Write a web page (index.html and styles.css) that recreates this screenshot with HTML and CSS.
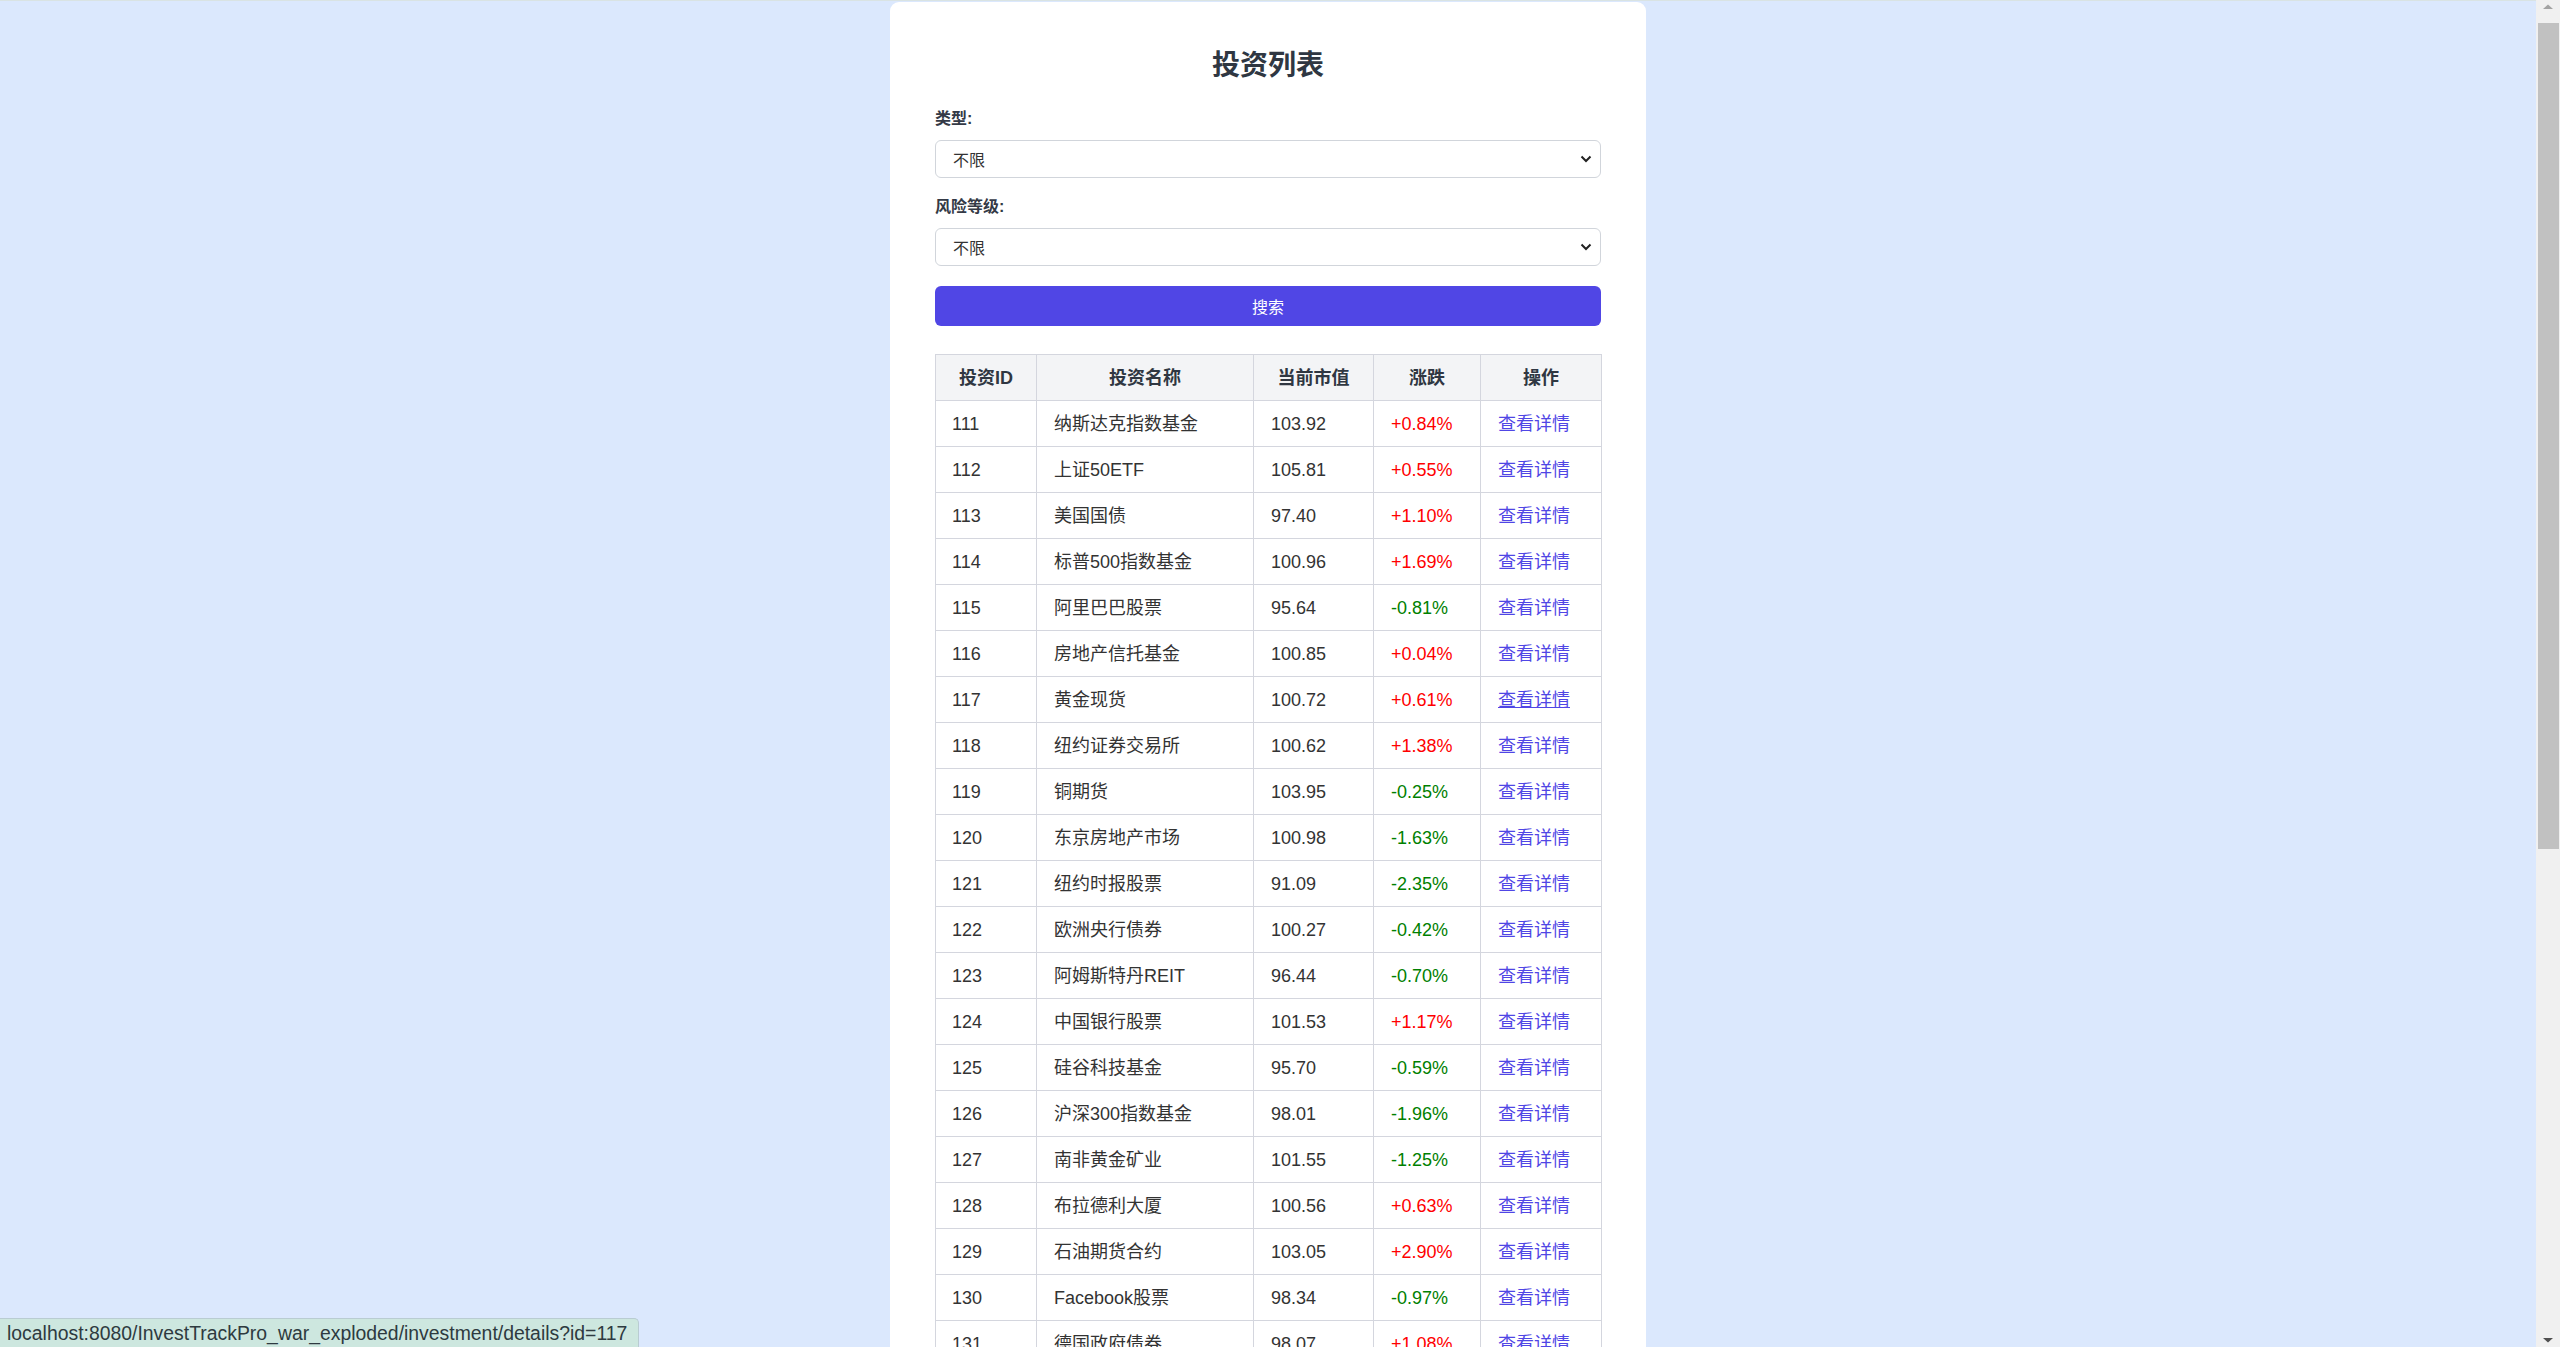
FILE: index.html
```html
<!DOCTYPE html>
<html lang="zh-CN">
<head>
<meta charset="utf-8">
<title>投资列表</title>
<link rel="stylesheet" href="styles.css">
</head>
<body>
<div class="topline"></div>
<main class="card">
  <h2 class="title">投资列表</h2>
  <form class="filter">
    <div class="group">
      <label class="label" for="type">类型:</label>
      <select id="type" class="select"><option>不限</option></select>
    </div>
    <div class="group">
      <label class="label" for="risk">风险等级:</label>
      <select id="risk" class="select"><option>不限</option></select>
    </div>
    <button type="button" class="btn">搜索</button>
  </form>
  <table class="grid">
    <colgroup>
      <col class="c1"><col class="c2"><col class="c3"><col class="c4"><col class="c5">
    </colgroup>
    <thead>
      <tr><th>投资ID</th><th>投资名称</th><th>当前市值</th><th>涨跌</th><th>操作</th></tr>
    </thead>
    <tbody>
      <tr><td>111</td><td>纳斯达克指数基金</td><td>103.92</td><td class="up">+0.84%</td><td><a href="#">查看详情</a></td></tr>
      <tr><td>112</td><td>上证50ETF</td><td>105.81</td><td class="up">+0.55%</td><td><a href="#">查看详情</a></td></tr>
      <tr><td>113</td><td>美国国债</td><td>97.40</td><td class="up">+1.10%</td><td><a href="#">查看详情</a></td></tr>
      <tr><td>114</td><td>标普500指数基金</td><td>100.96</td><td class="up">+1.69%</td><td><a href="#">查看详情</a></td></tr>
      <tr><td>115</td><td>阿里巴巴股票</td><td>95.64</td><td class="down">-0.81%</td><td><a href="#">查看详情</a></td></tr>
      <tr><td>116</td><td>房地产信托基金</td><td>100.85</td><td class="up">+0.04%</td><td><a href="#">查看详情</a></td></tr>
      <tr><td>117</td><td>黄金现货</td><td>100.72</td><td class="up">+0.61%</td><td><a href="#" class="hover">查看详情</a></td></tr>
      <tr><td>118</td><td>纽约证券交易所</td><td>100.62</td><td class="up">+1.38%</td><td><a href="#">查看详情</a></td></tr>
      <tr><td>119</td><td>铜期货</td><td>103.95</td><td class="down">-0.25%</td><td><a href="#">查看详情</a></td></tr>
      <tr><td>120</td><td>东京房地产市场</td><td>100.98</td><td class="down">-1.63%</td><td><a href="#">查看详情</a></td></tr>
      <tr><td>121</td><td>纽约时报股票</td><td>91.09</td><td class="down">-2.35%</td><td><a href="#">查看详情</a></td></tr>
      <tr><td>122</td><td>欧洲央行债券</td><td>100.27</td><td class="down">-0.42%</td><td><a href="#">查看详情</a></td></tr>
      <tr><td>123</td><td>阿姆斯特丹REIT</td><td>96.44</td><td class="down">-0.70%</td><td><a href="#">查看详情</a></td></tr>
      <tr><td>124</td><td>中国银行股票</td><td>101.53</td><td class="up">+1.17%</td><td><a href="#">查看详情</a></td></tr>
      <tr><td>125</td><td>硅谷科技基金</td><td>95.70</td><td class="down">-0.59%</td><td><a href="#">查看详情</a></td></tr>
      <tr><td>126</td><td>沪深300指数基金</td><td>98.01</td><td class="down">-1.96%</td><td><a href="#">查看详情</a></td></tr>
      <tr><td>127</td><td>南非黄金矿业</td><td>101.55</td><td class="down">-1.25%</td><td><a href="#">查看详情</a></td></tr>
      <tr><td>128</td><td>布拉德利大厦</td><td>100.56</td><td class="up">+0.63%</td><td><a href="#">查看详情</a></td></tr>
      <tr><td>129</td><td>石油期货合约</td><td>103.05</td><td class="up">+2.90%</td><td><a href="#">查看详情</a></td></tr>
      <tr><td>130</td><td>Facebook股票</td><td>98.34</td><td class="down">-0.97%</td><td><a href="#">查看详情</a></td></tr>
      <tr><td>131</td><td>德国政府债券</td><td>98.07</td><td class="up">+1.08%</td><td><a href="#">查看详情</a></td></tr>
      <tr><td>132</td><td>伦敦商业地产</td><td>99.12</td><td class="down">-0.33%</td><td><a href="#">查看详情</a></td></tr>
      <tr><td>133</td><td>白银期货</td><td>102.41</td><td class="up">+0.92%</td><td><a href="#">查看详情</a></td></tr>
      <tr><td>134</td><td>日经225指数基金</td><td>97.86</td><td class="down">-1.14%</td><td><a href="#">查看详情</a></td></tr>
      <tr><td>135</td><td>腾讯控股股票</td><td>104.27</td><td class="up">+1.45%</td><td><a href="#">查看详情</a></td></tr>
      <tr><td>136</td><td>新加坡REIT</td><td>99.58</td><td class="down">-0.21%</td><td><a href="#">查看详情</a></td></tr>
      <tr><td>137</td><td>天然气期货</td><td>96.73</td><td class="down">-2.08%</td><td><a href="#">查看详情</a></td></tr>
      <tr><td>138</td><td>苹果公司股票</td><td>103.66</td><td class="up">+0.77%</td><td><a href="#">查看详情</a></td></tr>
      <tr><td>139</td><td>中国国债</td><td>100.14</td><td class="up">+0.12%</td><td><a href="#">查看详情</a></td></tr>
      <tr><td>140</td><td>创业板指数基金</td><td>95.29</td><td class="down">-1.52%</td><td><a href="#">查看详情</a></td></tr>
      <tr><td>141</td><td>香港写字楼</td><td>98.93</td><td class="down">-0.66%</td><td><a href="#">查看详情</a></td></tr>
      <tr><td>142</td><td>铂金现货</td><td>101.08</td><td class="up">+0.48%</td><td><a href="#">查看详情</a></td></tr>
      <tr><td>143</td><td>特斯拉股票</td><td>105.37</td><td class="up">+2.21%</td><td><a href="#">查看详情</a></td></tr>
      <tr><td>144</td><td>美国公司债券</td><td>99.81</td><td class="down">-0.18%</td><td><a href="#">查看详情</a></td></tr>
      <tr><td>145</td><td>全球医疗基金</td><td>102.59</td><td class="up">+1.03%</td><td><a href="#">查看详情</a></td></tr>
      <tr><td>146</td><td>巴黎商业地产</td><td>97.15</td><td class="down">-0.89%</td><td><a href="#">查看详情</a></td></tr>
    </tbody>
  </table>
</main>
<div class="status">localhost:8080/InvestTrackPro_war_exploded/investment/details?id=117</div>
<div class="scrollbar" aria-hidden="true">
  <svg class="arrow" width="24" height="22" viewBox="0 0 24 22"><path d="M7 9 L12 4.5 L17 9 Z" fill="#a3a3a3"/></svg>
  <div class="rail"><div class="thumb"></div></div>
  <svg class="arrow" width="24" height="22" viewBox="0 0 24 22"><path d="M7 13 L12 17.5 L17 13 Z" fill="#505050"/></svg>
</div>
</body>
</html>
```

FILE: styles.css
```css
html {
  background: #dbe8fd;
  scrollbar-width: none;
}
body {
  margin: 0;
  padding-right: 24px;
  font-family: "Liberation Sans", Arial, "Noto Sans CJK SC", sans-serif;
  color: #333;
  font-size: 16px;
}
.topline {
  height: 1px;
  background: #d9e3e3;
}
.card {
  width: 756px;
  box-sizing: border-box;
  margin: 1px auto 0;
  padding: 47px 45px 45px;
  background: #fff;
  border-radius: 9px;
}
.title {
  margin: 0;
  text-align: center;
  font-size: 28px;
  line-height: 34px;
  font-weight: 700;
  color: #2f3742;
}
.filter {
  margin-top: 25px;
  display: flex;
  flex-direction: column;
}
.group {
  display: flex;
  flex-direction: column;
  gap: 10px;
  margin-bottom: 18px;
}
.label {
  font-size: 16px;
  line-height: 22px;
  font-weight: 600;
  color: #343a46;
}
.select {
  appearance: none;
  -webkit-appearance: none;
  height: 38px;
  box-sizing: border-box;
  border: 1px solid #d1d5db;
  border-radius: 6px;
  background: #fff url("data:image/svg+xml;utf8,<svg xmlns='http://www.w3.org/2000/svg' width='12' height='8'><path d='M1.5 1.5 L6 6 L10.5 1.5' fill='none' stroke='%23222' stroke-width='2'/></svg>") no-repeat right 8px center;
  padding: 2px 30px 0 17px;
  font-family: "Liberation Sans", Arial, "Noto Sans CJK SC", sans-serif;
  font-size: 16px;
  color: #333;
}
.btn {
  margin-top: 2px;
  height: 40px;
  border: 0;
  border-radius: 6px;
  background: #5046e5;
  color: #fff;
  font-family: "Liberation Sans", Arial, "Noto Sans CJK SC", sans-serif;
  font-size: 16px;
}
.grid {
  margin-top: 28px;
  width: 100%;
  border-collapse: collapse;
  table-layout: fixed;
}
.c1 { width: 101px; }
.c2 { width: 217px; }
.c3 { width: 120px; }
.c4 { width: 107px; }
.c5 { width: 121px; }
.grid th,
.grid td {
  border: 1px solid #d4d6de;
  padding: 13px 16px 11px;
  line-height: 21px;
  font-size: 18px;
  text-align: left;
  white-space: nowrap;
}
.grid td:nth-child(n+2) {
  padding-left: 17px;
}
.grid th {
  background: #f3f4f6;
  text-align: center;
  font-weight: 700;
  color: #2f3742;
}
.grid td {
  color: #333;
}
.up { color: #ff0000 !important; }
.down { color: #008000 !important; }
.grid a {
  color: #5046e5;
  text-decoration: none;
}
.grid a.hover {
  text-decoration: underline;
}
.status {
  position: fixed;
  left: 0;
  bottom: 0;
  height: 28px;
  line-height: 28px;
  padding: 0 11px 0 7px;
  background: #cde7df;
  border-top: 1px solid #b9ccd2;
  border-right: 1px solid #b9ccd2;
  border-top-right-radius: 5px;
  font-family: "Liberation Sans", Arial, sans-serif;
  font-size: 19.4px;
  color: #2e3a40;
}
.scrollbar {
  position: fixed;
  top: 0;
  right: 0;
  width: 24px;
  height: 100%;
  background: #f0f0f0;
  display: flex;
  flex-direction: column;
}
.arrow {
  display: block;
  flex: none;
}
.rail {
  flex: 1;
  padding: 1px 1px 0 2px;
}
.thumb {
  height: 826px;
  background: #c1c1c1;
}
```
